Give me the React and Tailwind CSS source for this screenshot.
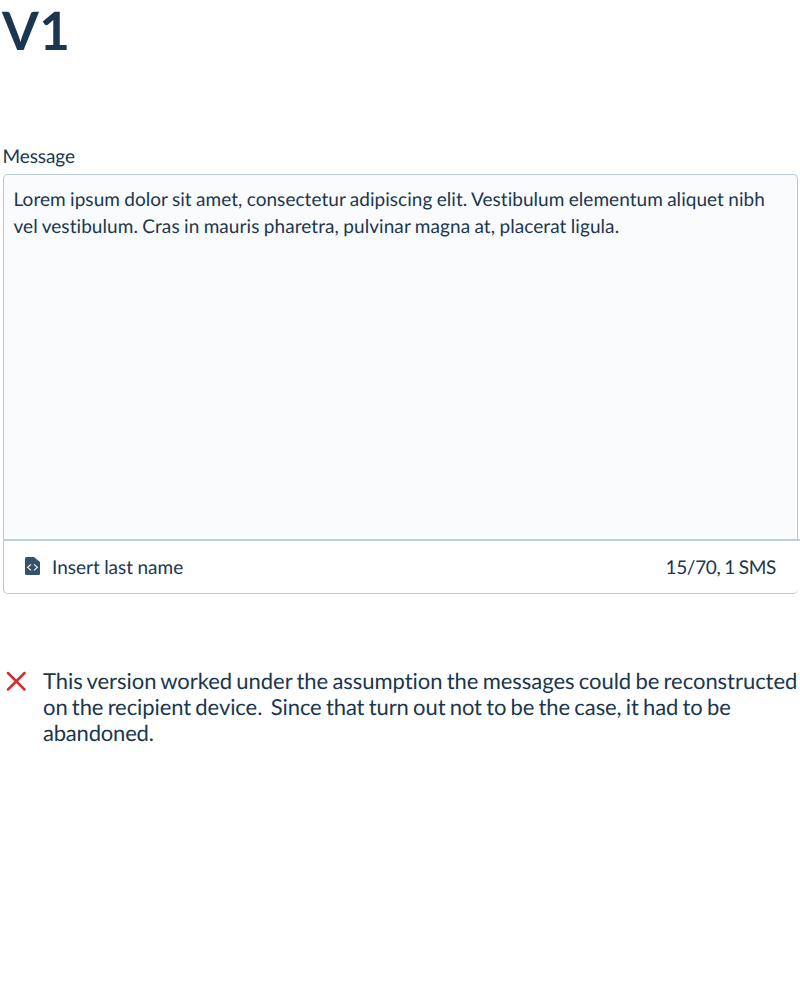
export default function App() {
  return (
    <main className="flex h-[996px] w-[800px] flex-col overflow-hidden bg-white font-['Lato',sans-serif] text-[#1a374f] [font-variant-ligatures:none] [text-rendering:geometricPrecision]">
      <h1 className="ml-[2px] h-[144px] text-[53px] leading-[62px] font-bold tracking-[0.5px]">V1</h1>
      <label className="ml-[2.5px] h-[30px] text-[19px] leading-[25px] tracking-[-0.1px]">Message</label>
      <section className="ml-[3px] h-[420px] w-[797px]">
        <div className="h-[365px] w-[795px] rounded-t-[5px] border border-b-0 border-[#b8c9d5] bg-[#fafbfd] pt-[11px] pl-[9.5px] text-[19px] leading-[27px] whitespace-nowrap">
          <p className="tracking-[0.045px] [word-spacing:-0.6px]">Lorem ipsum dolor sit amet, consectetur adipiscing elit. Vestibulum elementum aliquet nibh</p>
          <p className="tracking-[0.07px] [word-spacing:-0.6px]">vel vestibulum. Cras in mauris pharetra, pulvinar magna at, placerat ligula.</p>
        </div>
        <div className="h-[2px] w-[797px] bg-[#c0ced9]" />
        <div className="flex h-[53px] w-[795px] items-center rounded-b-[5px] border-b border-l border-[#b8c9d5] pr-[22px] pl-[21px] text-[19px]">
          <svg className="mb-[2px] h-[18px] w-[15px]" viewBox="0 0 15 18" fill="none">
            <path d="M1.5 0H9L15 5V16.5Q15 18 13.5 18H1.5Q0 18 0 16.5V1.5Q0 0 1.5 0Z" fill="#34536b" />
            <path d="M6 7.3L2.6 10.3L6 13.3M9 7.3L12.4 10.3L9 13.3" stroke="white" strokeWidth="1.1" />
          </svg>
          <span className="ml-[12px] pt-[2px] [word-spacing:-0.5px]">Insert last name</span>
          <span className="ml-auto pt-[2px] tracking-[-0.3px] [word-spacing:-0.9px]">15/70, 1 SMS</span>
        </div>
      </section>
      <section className="mt-[74px] flex">
        <svg className="mt-[3px] ml-[6px] h-[20px] w-[20px] shrink-0" viewBox="0 0 20 20">
          <path d="M2 2L18.5 18.5M18.5 2L2 18.5" stroke="#d12d2f" strokeWidth="2.5" strokeLinecap="round" />
        </svg>
        <div className="ml-[17px] text-[22px] leading-[26px] whitespace-pre">
          <p className="tracking-[-0.04px] [word-spacing:-1.3px]">This version worked under the assumption the messages could be reconstructed</p>
          <p className="tracking-[-0.08px] [word-spacing:-1.3px]">{"on the recipient device.  Since that turn out not to be the case, it had to be"}</p>
          <p className="tracking-[-0.2px]">abandoned.</p>
        </div>
      </section>
    </main>
  );
}
